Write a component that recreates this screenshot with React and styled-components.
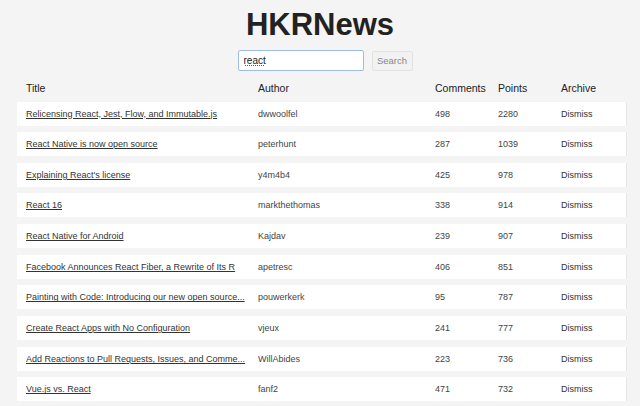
import styled, { createGlobalStyle } from 'styled-components';

const stories = [
  { title: 'Relicensing React, Jest, Flow, and Immutable.js', author: 'dwwoolfel', comments: 498, points: 2280 },
  { title: 'React Native is now open source', author: 'peterhunt', comments: 287, points: 1039 },
  { title: "Explaining React's license", author: 'y4m4b4', comments: 425, points: 978 },
  { title: 'React 16', author: 'markthethomas', comments: 338, points: 914 },
  { title: 'React Native for Android', author: 'Kajdav', comments: 239, points: 907 },
  { title: 'Facebook Announces React Fiber, a Rewrite of Its R', author: 'apetresc', comments: 406, points: 851 },
  { title: 'Painting with Code: Introducing our new open source...', author: 'pouwerkerk', comments: 95, points: 787 },
  { title: 'Create React Apps with No Configuration', author: 'vjeux', comments: 241, points: 777 },
  { title: 'Add Reactions to Pull Requests, Issues, and Comme...', author: 'WillAbides', comments: 223, points: 736 },
  { title: 'Vue.js vs. React', author: 'fanf2', comments: 471, points: 732 },
];

export default function App() {
  return (
    <>
      <GlobalStyle />
      <Page>
        <Heading>HKRNews</Heading>
        <SearchForm onSubmit={(e) => e.preventDefault()}>
          <SearchInput type="text" defaultValue="react" spellCheck={false} />
          <SearchButton type="submit">Search</SearchButton>
        </SearchForm>
        <Table>
          <HeaderRow>
            <HeaderCell>Title</HeaderCell>
            <HeaderCell>Author</HeaderCell>
            <HeaderCell>Comments</HeaderCell>
            <HeaderCell>Points</HeaderCell>
            <HeaderCell>Archive</HeaderCell>
          </HeaderRow>
          <Rows>
            {stories.map((s) => (
              <Row key={s.title}>
                <Cell><a href="#">{s.title}</a></Cell>
                <Cell>{s.author}</Cell>
                <Cell>{s.comments}</Cell>
                <Cell>{s.points}</Cell>
                <Cell><Dismiss type="button">Dismiss</Dismiss></Cell>
              </Row>
            ))}
          </Rows>
        </Table>
      </Page>
    </>
  );
}

const GlobalStyle = createGlobalStyle`
  body {
    margin: 0;
    background: #f4f4f4;
    font-family: "Liberation Sans", Arial, sans-serif;
    color: #333;
  }
`;

const Page = styled.div`
  padding-top: 7px;
  display: flex;
  flex-direction: column;
  align-items: center;
`;

const Heading = styled.h1`
  margin: 0;
  font-size: 31px;
  line-height: 36px;
  font-weight: bold;
  color: #222;
`;

const SearchForm = styled.form`
  margin-top: 7px;
  padding-left: 10px;
  display: flex;
  gap: 8px;
  align-items: center;
`;

const SearchInput = styled.input`
  box-sizing: border-box;
  width: 126px;
  height: 21px;
  padding: 0 5px;
  border: 1px solid #9fbce8;
  border-radius: 2px;
  background: #fff;
  font-family: "Liberation Sans", Arial, sans-serif;
  font-size: 10px;
  color: #222;
  outline: none;
  text-decoration: underline dotted #d22;
`;

const SearchButton = styled.button`
  box-sizing: border-box;
  width: 41px;
  height: 20px;
  padding: 0;
  border: 1px solid #e2e2e2;
  border-radius: 2px;
  background: #f2f2f2;
  font-family: "Liberation Sans", Arial, sans-serif;
  font-size: 9.5px;
  color: #888;
`;

const Table = styled.div`
  width: 610px;
  margin: 7px 13px 0 17px;
`;

const columns = `
  display: grid;
  grid-template-columns: 232px 177px 63px 63px 1fr;
  padding-left: 9px;
  align-items: center;
`;

const HeaderRow = styled.div`
  ${columns}
  height: 20px;
`;

const HeaderCell = styled.span`
  font-size: 10.5px;
  color: #222;
`;

const Rows = styled.div`
  margin-top: 3.5px;
  display: flex;
  flex-direction: column;
  gap: 6.67px;
`;

const Row = styled.div`
  ${columns}
  height: 24px;
  background: #fff;
  border-right: 1px solid #e6e6e6;
  font-size: 9px;
  white-space: nowrap;
`;

const Cell = styled.span`
  overflow: hidden;
  text-overflow: ellipsis;
  padding-right: 4px;
  color: #444;

  a {
    color: #333;
    text-decoration: underline;
  }
`;

const Dismiss = styled.button`
  padding: 0;
  border: none;
  background: none;
  font-family: inherit;
  font-size: inherit;
  color: #333;
`;
